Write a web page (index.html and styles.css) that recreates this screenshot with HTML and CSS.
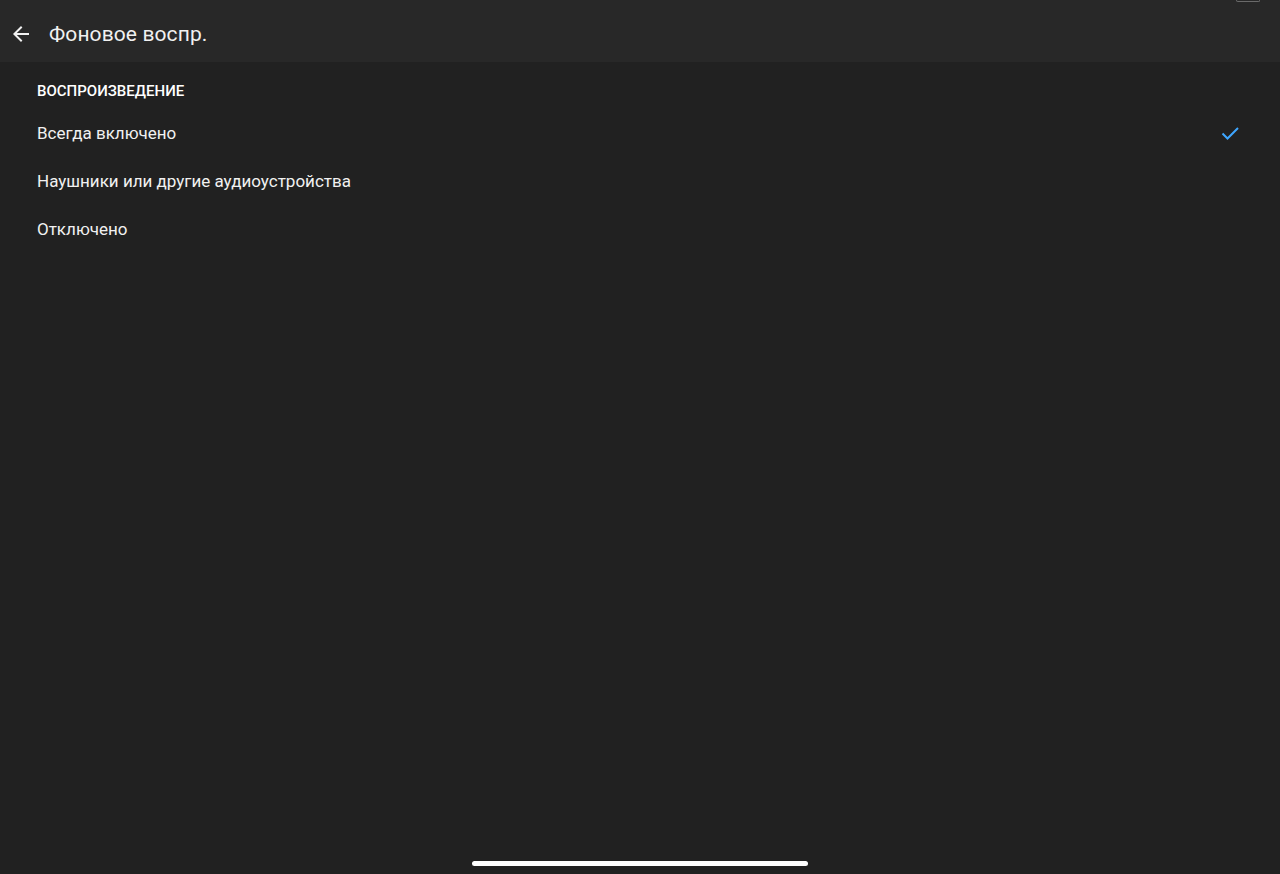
FILE: index.html
```html
<!DOCTYPE html>
<html lang="ru">
<head>
    <meta charset="UTF-8">
    <meta name="viewport" content="width=device-width, initial-scale=1.0">
    <title>Фоновое воспр.</title>
    <link rel="stylesheet" href="styles.css">
</head>
<body>
    <div class="app">
        <div class="status-bar">
            <span class="battery"></span>
        </div>
        <header class="top-bar">
            <button class="back-button" aria-label="Назад">
                <svg width="24" height="24" viewBox="0 0 24 24">
                    <path d="M20 11H7.83l5.59-5.59L12 4l-8 8 8 8 1.41-1.41L7.83 13H20v-2z" fill="#f1f1f1"/>
                </svg>
            </button>
            <h1 class="title">Фоновое воспр.</h1>
        </header>

        <main class="settings">
            <div class="section-title">ВОСПРОИЗВЕДЕНИЕ</div>
            <div class="option selected">
                <span class="option-label">Всегда включено</span>
                <svg class="check" width="24" height="24" viewBox="0 0 24 24">
                    <path d="M4.5 12.5l5 5L20 7" fill="none" stroke="#3ea6ff" stroke-width="2"/>
                </svg>
            </div>
            <div class="option">
                <span class="option-label">Наушники или другие аудиоустройства</span>
            </div>
            <div class="option">
                <span class="option-label">Отключено</span>
            </div>
        </main>

        <div class="home-indicator"></div>
    </div>
</body>
</html>
```

FILE: styles.css
```css
* {
    box-sizing: border-box;
}

body {
    margin: 0;
    background-color: #212121;
    color: #f1f1f1;
    font-family: Roboto, "Noto Sans", Arial, sans-serif;
}

.app {
    height: 874px;
    display: flex;
    flex-direction: column;
    position: relative;
    overflow: hidden;
}

/* Status bar (mostly cut off at the top) */
.status-bar {
    height: 4px;
    background-color: #282828;
    position: relative;
}

.battery {
    position: absolute;
    right: 20px;
    top: -2px;
    width: 24px;
    height: 4px;
    border: 1px solid #6a6a6a;
    border-top: none;
    border-radius: 0 0 2px 2px;
}

.top-bar {
    height: 58px;
    background-color: #282828;
    display: flex;
    align-items: center;
    padding-left: 9px;
    padding-top: 2px;
}

.back-button {
    width: 24px;
    height: 24px;
    padding: 0;
    border: none;
    background: none;
    display: flex;
    align-items: center;
    justify-content: center;
    cursor: pointer;
}

.title {
    margin: 0 0 0 16px;
    font-size: 21px;
    font-weight: 400;
    letter-spacing: 0.1px;
    color: #f1f1f1;
}

.settings {
    flex-grow: 1;
    padding-top: 19px;
}

.section-title {
    padding-left: 37px;
    font-size: 15px;
    font-weight: 500;
    height: 20px;
    line-height: 20px;
    color: #ffffff;
    margin-bottom: 12px;
}

.option {
    height: 48px;
    display: flex;
    align-items: center;
    justify-content: space-between;
    padding: 0 38px 0 37px;
    cursor: pointer;
    margin-top: -4px;
    margin-bottom: 4px;
}

.option-label {
    font-size: 17px;
    color: #f1f1f1;
}

.check {
    flex-shrink: 0;
}

.home-indicator {
    position: absolute;
    left: 472px;
    bottom: 8px;
    width: 336px;
    height: 5px;
    border-radius: 3px;
    background-color: #ffffff;
}
```
